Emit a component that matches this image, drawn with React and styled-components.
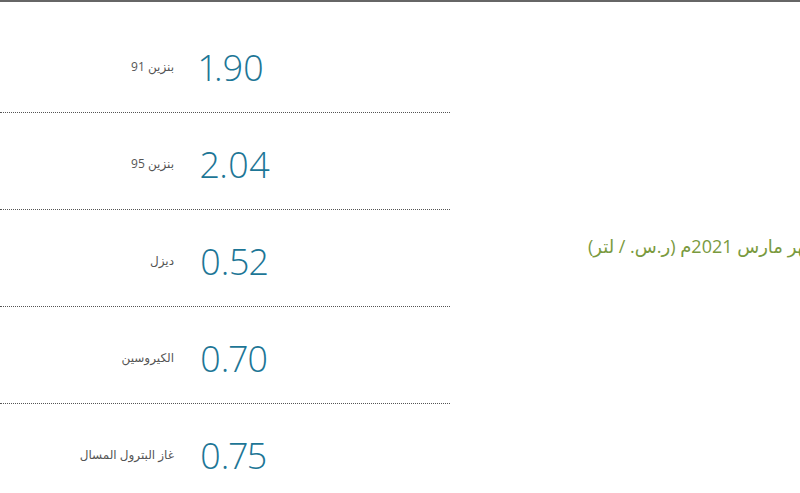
import React from "react";
import styled, { createGlobalStyle } from "styled-components";

const prices = [
  { label: "بنزين 91", value: "1.90" },
  { label: "بنزين 95", value: "2.04" },
  { label: "ديزل", value: "0.52" },
  { label: "الكيروسين", value: "0.70" },
  { label: "غاز البترول المسال", value: "0.75" },
];

const GlobalStyle = createGlobalStyle`
  html, body {
    margin: 0;
    padding: 0;
    background: #ffffff;
    overflow: hidden;
  }
  body {
    font-family: "Open Sans", "DejaVu Sans", sans-serif;
  }
`;

const Page = styled.div`
  border-top: 2px solid #666666;
  display: flex;
  height: 491px;
`;

const PriceList = styled.div`
  width: 450px;
  padding-top: 14px;
  flex-shrink: 0;
`;

const Row = styled.div`
  box-sizing: border-box;
  display: grid;
  grid-template-columns: 174px auto;
  column-gap: 26px;
  align-items: center;
  height: 97px;
  padding-top: 8px;
  border-bottom: 1px dotted #555555;
`;

const Label = styled.span`
  direction: rtl;
  text-align: right;
  font-size: 12px;
  color: #555555;
  margin-top: -3px;
`;

const Value = styled.span`
  font-family: "Open Sans", sans-serif;
  font-weight: 300;
  font-size: 36px;
  font-variant-numeric: proportional-nums;
  color: #1d7696;
  line-height: 1;
`;

const Caption = styled.div`
  flex: 1;
  padding-left: 138px;
  display: flex;
  align-items: center;
  padding-bottom: 4px;
`;

const CaptionText = styled.span`
  direction: rtl;
  white-space: nowrap;
  font-size: 18px;
  color: #7a9a3e;
`;

export default function App() {
  return (
    <>
      <GlobalStyle />
      <Page>
        <PriceList>
          {prices.map((p) => (
            <Row key={p.label}>
              <Label>{p.label}</Label>
              <Value>{p.value}</Value>
            </Row>
          ))}
        </PriceList>
        <Caption>
          <CaptionText>أسعار المنتجات لشهر مارس 2021م (ر.س. / لتر)</CaptionText>
        </Caption>
      </Page>
    </>
  );
}
